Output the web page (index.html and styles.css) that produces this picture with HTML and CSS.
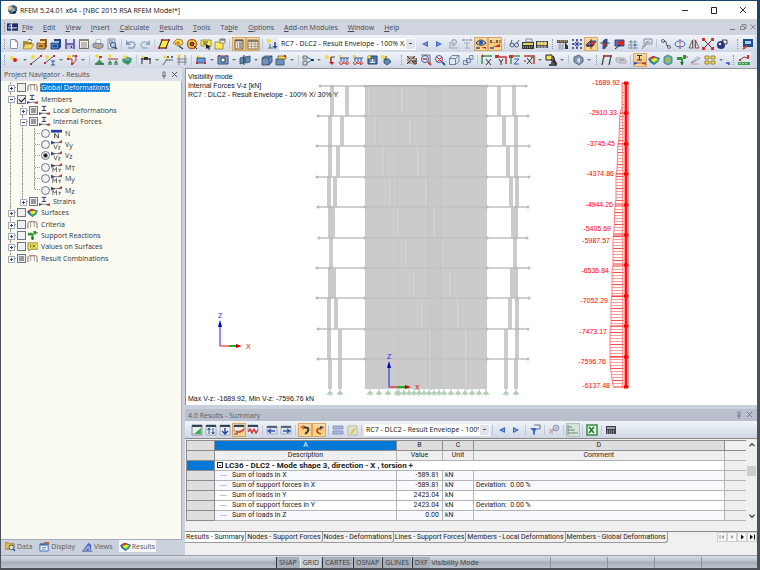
FILE: index.html
```html
<!DOCTYPE html>
<html lang="en">
  <head>
    <meta charset="UTF-8" />
    <meta name="viewport" content="width=device-width, initial-scale=1.0" />
    <title>RFEM 5.24.01 x64 - [NBC 2015 RSA RFEM Model*]</title>
    <link rel="stylesheet" href="styles.css">
  </head>
  <body>
    <!-- Icon set, 12 x 12 -->
    <svg class="sprite" aria-hidden="true">
      <symbol id="app" viewBox="0 0 12 12"><path d="M3 2l5-1 3 2v4l-3 3H4L2 7z" fill="#3d5c8c"/><path d="M1 4l4-2 2 2-3 3z" fill="#d9c37a"/><path d="M5 5l4-1v3l-3 1z" fill="#93a9c8"/><path d="M7 9l3-1" stroke="#222" stroke-width="2"/></symbol>
      <symbol id="doc" viewBox="0 0 12 12"><path d="M0 2h12v8H0z" fill="#1c2c6e"/><path d="M1 7h10M5 2v8M2 5l3-2" stroke="#fff"/></symbol>
      <symbol id="new" viewBox="0 0 12 12"><path d="M2.500 1.500h5l2 2v7h-7z" fill="#fff" stroke="#8a93a5"/><path d="M7.500 1.500v2h2" fill="none" stroke="#8a93a5"/></symbol>
      <symbol id="open" viewBox="0 0 12 12"><path d="M1 3h4l1 1h4v6H1z" fill="#a8892d"/><path d="M3 6h9l-3 5H1z" fill="#f2d768" stroke="#8a6f1d" stroke-width=".6"/><path d="M6 2c2-1 3-1 4 1" fill="none" stroke="#456"/></symbol>
      <symbol id="cab" viewBox="0 0 12 12"><path d="M4 1h7v8l-2 2V5H4z" fill="#8d5f1d"/><path d="M1 5h8v6H1z" fill="#dd9d3c" stroke="#4f3510" stroke-width=".7"/><path d="M4 3h5v2H4z" fill="#f5cf8a"/><path d="M3 8h4" stroke="#222"/></symbol>
      <symbol id="cabb" viewBox="0 0 12 12"><path d="M4 1h7v8l-2 2V5H4z" fill="#27477f"/><path d="M1 5h8v6H1z" fill="#4c7cc8" stroke="#15294f" stroke-width=".7"/><path d="M4 3h5v2H4z" fill="#9cbbe8"/><path d="M3 8h4" stroke="#112"/></symbol>
      <symbol id="save" viewBox="0 0 12 12"><path d="M1 1h10v10H1z" fill="#7168ad"/><path d="M3 1h6v4H3z" fill="#dfe2f2"/><path d="M3 7h6v4H3z" fill="#b9b6da"/><path d="M7 8h1v2H7z" fill="#333"/></symbol>
      <symbol id="list" viewBox="0 0 12 12"><rect x="1.500" y="1.500" width="9" height="9" fill="#f4f1e6" stroke="#77705f"/><path d="M1 2h10" stroke="#8f8673" stroke-width="2"/><path d="M3 5h6M3 7h6M3 9h6" stroke="#888"/></symbol>
      <symbol id="print" viewBox="0 0 12 12"><path d="M3 5l2-4 4 1-1 4z" fill="#fff" stroke="#889" stroke-width=".6"/><path d="M1 6l3-1 7 1v3l-4 2-6-2z" fill="#a8adb9" stroke="#555d70" stroke-width=".7"/><path d="M3 8l4 1" stroke="#e0a030"/></symbol>
      <symbol id="preview" viewBox="0 0 12 12"><path d="M2 1h7v10H2z" fill="#dfe6f2" stroke="#6a7890" stroke-width=".8"/><path d="M3 3h4M3 5h2" stroke="#5574a5"/><circle cx="7" cy="7" r="2.500" fill="#bcd8f0" stroke="#344a6c"/><path d="M9 9l2 2" stroke="#344a6c" stroke-width="1.500"/></symbol>
      <symbol id="undo" viewBox="0 0 12 12"><path d="M3 5c3-2 7-1 7 2 0 1-1 2-2 3H3" fill="none" stroke="#8fa3bd" stroke-width="1.500"/><path d="M1 2v5h5z" fill="#8199b8"/></symbol>
      <symbol id="redo" viewBox="0 0 12 12"><path d="M9 5C6 3 2 4 2 7c0 1 1 2 2 3h5" fill="none" stroke="#a0b4cb" stroke-width="1.500"/><path d="M11 2v5H6z" fill="#8fa6c2"/></symbol>
      <symbol id="poly" viewBox="0 0 12 12"><path d="M4 2h7L8 10H1z" fill="#ffe94a" stroke="#111"/><path d="M3 1h2v2H3zM10 1h2v2h-2zM0 9h2v2H0zM7 9h2v2H7z" fill="#c22"/></symbol>
      <symbol id="lens" viewBox="0 0 12 12"><path d="M1 5l4-4 5 1 1 4-5 2z" fill="#ffe44a" stroke="#8a6a1d" stroke-width=".8"/><path d="M3 5h5M6 3v4" stroke="#c33" stroke-width=".8"/><path d="M7 8l4 3" stroke="#444" stroke-width="1.500"/></symbol>
      <symbol id="target" viewBox="0 0 12 12"><circle cx="6" cy="6" r="4.500" fill="#ffe44a" stroke="#c1561a" stroke-width="1.500"/><circle cx="6" cy="6" r="2" fill="#e33" stroke="#222"/><path d="M8 8l3 3" stroke="#222"/></symbol>
      <symbol id="note" viewBox="0 0 12 12"><path d="M1 2h10v6H1z" fill="#fbec52" stroke="#8b8434" stroke-width=".8"/><path d="M3 4h5M3 6h4" stroke="#444"/><path d="M6 6l5 3-2 .5 1 2-1 .5-1-2-2 1z" fill="#222"/></symbol>
      <symbol id="sheet" viewBox="0 0 12 12"><path d="M1 4h8v7H1z" fill="#fbec52" stroke="#8b8434" stroke-width=".8"/><path d="M6 1h5v4H6z" fill="#f8f8ef" stroke="#6c6c5a" stroke-width=".8"/><path d="M6 2h5" stroke="#444"/></symbol>
      <symbol id="nav" viewBox="0 0 12 12"><rect x="2" y="2" width="8" height="9" fill="#efe8da" stroke="#5f5646"/><path d="M2 2.500h8" stroke="#555" stroke-width="1.500"/><path d="M4 5h1M6 5h3M4 7h1M6 7h3M4 9h1M6 9h3" stroke="#555"/></symbol>
      <symbol id="grid" viewBox="0 0 12 12"><rect x="1" y="2" width="10" height="9" fill="#f1e8d6" stroke="#6b604b" stroke-width=".8"/><path d="M1 3h10" stroke="#8a7a5c" stroke-width="2"/><path d="M1 6h10M1 8.500h10M4.500 4v7M8 4v7" stroke="#9a8c70" stroke-width=".7"/></symbol>
      <symbol id="load" viewBox="0 0 12 12"><circle cx="3" cy="3" r="2" fill="#f3da3a"/><path d="M2 10h5M4 6v4" stroke="#666"/><path d="M9 4v5" stroke="#2746a6" stroke-width="1.500"/><path d="M6.500 8h5L9 11z" fill="#2746a6"/></symbol>
      <symbol id="prev" viewBox="0 0 12 12"><path d="M9 3v6L3 6z" fill="#3a67c4"/><path d="M8 5v2L6 6z" fill="#b5ccf3"/></symbol>
      <symbol id="next" viewBox="0 0 12 12"><path d="M3 3v6l6-3z" fill="#3a67c4"/><path d="M4 5v2l2-1z" fill="#b5ccf3"/></symbol>
      <symbol id="ghost" viewBox="0 0 12 12"><circle cx="7" cy="4" r="2.500" fill="#cfd4dc" stroke="#9aa2af"/><path d="M2 10h9M3 4v6M5 8l3-1" stroke="#a2a9b5" stroke-width="1.200" fill="none"/></symbol>
      <symbol id="ghostx" viewBox="0 0 12 12"><path d="M1 2h3M5 2h2M8 2h3" stroke="#8f97a5" stroke-width="1.500"/><path d="M3 5h6M6 5v5M4 10h5" stroke="#a8aebb"/></symbol>
      <symbol id="eye" viewBox="0 0 12 12"><path d="M1 5c3-4 7-4 10 0-3 3-7 3-10 0z" fill="#a9bcd8" stroke="#253a68"/><circle cx="6" cy="4.500" r="2" fill="#2b4f9c"/><path d="M1 10h4" stroke="#2b4f9c" stroke-width="1.500"/><path d="M6 9h5v2z" fill="#d52b1e"/></symbol>
      <symbol id="xxx" viewBox="0 0 12 12"><path d="M1 2l2 3M3 2L1 5M5 4v1M7 2l2 3M9 2L7 5M11 2v3" stroke="#5a3d12" stroke-width=".9"/><path d="M1 10h4" stroke="#2b4f9c" stroke-width="1.500"/><path d="M4 9l7-3v3z" fill="#d52b1e"/></symbol>
      <symbol id="glass" viewBox="0 0 12 12"><circle cx="4" cy="7" r="2" fill="none" stroke="#4a5c7c"/><circle cx="8.500" cy="7" r="2" fill="none" stroke="#4a5c7c"/><path d="M2 7l2-5M9 5l2-3" stroke="#4a5c7c" fill="none"/></symbol>
      <symbol id="film" viewBox="0 0 12 12"><path d="M0 4h12v7H0z" fill="#3a3a36"/><path d="M1 5h10v2H1z" fill="#e5d45e"/><path d="M1 9h10" stroke="#ccd" stroke-dasharray="1 1"/><path d="M4 1h6v3H4z" fill="#e9edf4" stroke="#567" stroke-width=".7"/></symbol>
      <symbol id="film2" viewBox="0 0 12 12"><path d="M0 3h12v7H0z" fill="#3a3a36"/><path d="M1 4h10v3H1z" fill="#d9c84f"/><path d="M3 3v7M6 3v7M9 3v7M1 9h10" stroke="#dde" stroke-width=".7"/></symbol>
      <symbol id="shade" viewBox="0 0 12 12"><path d="M0 2h11v3H0z" fill="#5f574a"/><path d="M1 3h9" stroke="#d7c9a4" stroke-dasharray="1 1"/><path d="M1 7h6M1 9h6M1 11h6M3 5v6M6 5v6" stroke="#8d97a6" stroke-width=".7"/><path d="M8 4l3 4v3H8z" fill="#333"/></symbol>
      <symbol id="dots" viewBox="0 0 12 12"><path d="M1 1h2v2H1zM9 1h2v2H9zM1 9h2v2H1zM9 9h2v2H9zM5 1h2v2H5zM5 9h2v2H5zM1 5h2v2H1zM9 5h2v2H9z" fill="#5968a8"/><path d="M6 2v8M2 6h8M4 4l4 4M8 4L4 8" stroke="#26358c" stroke-width=".8"/></symbol>
      <symbol id="planeb" viewBox="0 0 12 12"><path d="M1 7l4-4h6L8 8H2z" fill="#3d76d0" stroke="#16325f" stroke-width=".8"/><path d="M6 1v10M1 8h7" stroke="#222" stroke-width=".8"/><path d="M5 4h3v3H5z" fill="#d22"/></symbol>
      <symbol id="planer" viewBox="0 0 12 12"><path d="M4 3l4-2v7l-4 3z" fill="#3d62c0" stroke="#16325f" stroke-width=".8"/><path d="M1 5h10M6 1v10" stroke="#333" stroke-width=".8"/><path d="M4 5h3v3H4z" fill="#d22"/></symbol>
      <symbol id="planex" viewBox="0 0 12 12"><path d="M2 2h9v6H2z" fill="#4674ca" stroke="#16325f" stroke-width=".8"/><path d="M5 3h5v4H5z" fill="#d22"/><path d="M2 11l5-4" stroke="#222"/></symbol>
      <symbol id="wire" viewBox="0 0 12 12"><path d="M2 4h8M1 7h10M1 10h10M4 2v9M8 2v9" stroke="#7e93aa" fill="none"/><path d="M3 3h1v1H3zM7 6h2v2H7z" fill="#58768f"/></symbol>
      <symbol id="wire2" viewBox="0 0 12 12"><path d="M3 1h8v5H3z" fill="#dfe5ee" stroke="#8391a6"/><path d="M1 11l6-8M1 8h4M5 4h4" stroke="#8391a6"/></symbol>
      <symbol id="copy" viewBox="0 0 12 12"><circle cx="3" cy="3" r="1.500" fill="none" stroke="#667"/><circle cx="9" cy="9" r="1.500" fill="none" stroke="#667"/><path d="M4 3c4 0 1 5 4 5" stroke="#333" fill="none"/></symbol>
      <symbol id="rot" viewBox="0 0 12 12"><ellipse cx="6" cy="6" rx="5" ry="3" fill="none" stroke="#4565b5"/><path d="M6 1v10" stroke="#c33" stroke-dasharray="2 1"/></symbol>
      <symbol id="mirror" viewBox="0 0 12 12"><path d="M4.500 2v8H1zM7.500 2v8H11z" fill="#e3e6ec" stroke="#555" stroke-width=".9"/><path d="M6 1v10" stroke="#b55" stroke-width=".7"/></symbol>
      <symbol id="cross" viewBox="0 0 12 12"><path d="M1 1l10 10M11 1L1 11" stroke="#333"/><path d="M0 0h3v3H0zM9 0h3v3H9zM0 9h3v3H0zM9 9h3v3H9zM5 5h2v2H5z" fill="#d3322a"/></symbol>
      <symbol id="ball" viewBox="0 0 12 12"><circle cx="5" cy="7" r="4" fill="#26357d"/><path d="M6 2h5v4H8z" fill="#dfe3ee" stroke="#222" stroke-width=".8"/><circle cx="4" cy="6" r="1.300" fill="#dfe3ee"/></symbol>
      <symbol id="screen" viewBox="0 0 12 12"><path d="M1 1h10v8H1z" fill="#214a8b"/><path d="M3 3h6v3H3z" fill="#a9cdf0"/><path d="M1 11l4-3" stroke="#d43" stroke-width="2"/></symbol>
      <symbol id="node" viewBox="0 0 12 12"><circle cx="4" cy="4" r="2" fill="#f3da3a"/><circle cx="7" cy="6" r="2" fill="#d22"/></symbol>
      <symbol id="line" viewBox="0 0 12 12"><circle cx="3" cy="3" r="2" fill="#f3da3a"/><path d="M1 10L11 2" stroke="#555"/><path d="M0 9h2v2H0zM10 1h2v2h-2z" fill="#d22"/></symbol>
      <symbol id="member" viewBox="0 0 12 12"><circle cx="3" cy="3" r="2" fill="#f3da3a"/><path d="M1 9L10 2" stroke="#555"/><path d="M0 8h2v2H0zM9 1h2v2H9z" fill="#d22"/><path d="M7 7h4M9 7v4M7 11h4" stroke="#3452a4"/></symbol>
      <symbol id="arc" viewBox="0 0 12 12"><circle cx="3" cy="3" r="2" fill="#f3da3a"/><path d="M2 5h4v5M6 2h4v4L7 10" stroke="#a33" fill="none"/><path d="M1 4h2v2H1zM9 1h2v2H9zM5 9h2v2H5z" fill="#d22"/></symbol>
      <symbol id="sup" viewBox="0 0 12 12"><circle cx="4" cy="2" r="1.700" fill="#f3da3a"/><path d="M6 2v4l-3 3h7L7 6" fill="#3a9a4c"/><path d="M2 10h9" stroke="#225c2d" stroke-width="1.500"/><path d="M6 2h3v2H6z" fill="#c33"/></symbol>
      <symbol id="sup2" viewBox="0 0 12 12"><circle cx="3" cy="2" r="1.700" fill="#f3da3a"/><path d="M1 5h10" stroke="#a33"/><path d="M3 6l2 3H1zM9 6l2 3H7z" fill="#3a9a4c"/><path d="M1 10h4M7 10h4" stroke="#225c2d"/></symbol>
      <symbol id="surf" viewBox="0 0 12 12"><path d="M1 8l5-3 5 2-4 4z" fill="#3aa055"/><path d="M1 6l5-3 5 2-4 3z" fill="#55b0b4" stroke="#225c2d" stroke-width=".6"/><circle cx="4" cy="3" r="1.700" fill="#f3da3a"/></symbol>
      <symbol id="dim" viewBox="0 0 12 12"><circle cx="3" cy="3" r="1.500" fill="#f3da3a"/><path d="M1 5h10M2 4v6M10 4v6" stroke="#222" fill="none"/><path d="M4 3h4v3H4z" fill="#333"/></symbol>
      <symbol id="xx" viewBox="0 0 12 12"><circle cx="3" cy="3" r="1.700" fill="#f3da3a"/><path d="M4 6h7M1 11l4-6" stroke="#466"/><path d="M5 2l2 2M7 2L5 4M9 2l2 2M11 2L9 4" stroke="#333" stroke-width=".7"/></symbol>
      <symbol id="axes" viewBox="0 0 12 12"><circle cx="3" cy="2" r="1.700" fill="#f3da3a"/><path d="M1 8h10M3 3v8M9 1v10M1 5h10" stroke="#777" stroke-width=".9"/></symbol>
      <symbol id="rect" viewBox="0 0 12 12"><circle cx="3" cy="3" r="1.700" fill="#f3da3a"/><path d="M2 4h8v5H2z" fill="#6a9bd5" stroke="#34507e"/><path d="M9 8h2v2H9zM1 8h2v2H1z" fill="#d22"/></symbol>
      <symbol id="opening" viewBox="0 0 12 12"><path d="M1 2h10v8H1z" fill="#7aa3d4" stroke="#34507e"/><path d="M4 4h4v4H4z" fill="#fff" stroke="#333"/><path d="M1 1h2v2H1zM9 1h2v2H9z" fill="#a44"/></symbol>
      <symbol id="inter" viewBox="0 0 12 12"><path d="M1 4l4-1v6L1 10zM6 3l5-1v6l-5 1z" fill="#5b8fb4" stroke="#2d4d6c" stroke-width=".8"/><path d="M5 1v10" stroke="#333"/></symbol>
      <symbol id="solid" viewBox="0 0 12 12"><path d="M1 4l3-2h7v6l-3 3H1z" fill="#6d93bd" stroke="#2d4462" stroke-width=".8"/><path d="M1 4h7v7M8 4l3-2" stroke="#2d4462" fill="none" stroke-width=".8"/></symbol>
      <symbol id="solidn" viewBox="0 0 12 12"><path d="M1 5h8v6H1z" fill="#6d93bd" stroke="#2d4462" stroke-width=".8"/><path d="M3 2h8v3H3z" fill="#eecf62" stroke="#7d6820" stroke-width=".8"/><path d="M9 1h2v2H9z" fill="#d22"/></symbol>
      <symbol id="conn" viewBox="0 0 12 12"><path d="M1 2h4v3H1zM1 7h4v4H1z" fill="#cfd8e4" stroke="#555" stroke-width=".8"/><path d="M5 3l5 3-5 3" fill="none" stroke="#2c8a92"/><path d="M9 5h3v2H9z" fill="#235"/></symbol>
      <symbol id="loadn" viewBox="0 0 12 12"><circle cx="3" cy="3" r="1.900" fill="#f3da3a"/><path d="M7 3v6" stroke="#b22" stroke-width="1.500"/><path d="M5 8h5l-2 3z" fill="#b22"/><path d="M7 3h4" stroke="#445"/></symbol>
      <symbol id="loadm" viewBox="0 0 12 12"><circle cx="2.500" cy="2.500" r="1.800" fill="#f3da3a"/><path d="M2 4h9M3 4v4M6 4v4M9 4v4" stroke="#3452a4" fill="none"/><path d="M1 8l2 3 2-3M5 8l1 2 2-2M8 8l1 3 2-3" stroke="#c33" fill="none"/></symbol>
      <symbol id="loads" viewBox="0 0 12 12"><path d="M2 2h9v8H2z" fill="#4f78b8" stroke="#223e6c"/><path d="M4 5h5v4H4z" fill="#e8eef8"/><circle cx="3" cy="3" r="1.700" fill="#f3da3a"/><path d="M5 4v4M8 4v4" stroke="#235"/></symbol>
      <symbol id="loadf" viewBox="0 0 12 12"><circle cx="3" cy="3" r="1.900" fill="#f3da3a"/><path d="M4 5h5l2 3-4 3-3-2z" fill="#5d87ad" stroke="#26405c" stroke-width=".7"/><path d="M6 2v4" stroke="#333"/></symbol>
      <symbol id="sel" viewBox="0 0 12 12"><path d="M1 2h8v8H1z" fill="#b0a698"/><path d="M1 2l8 8M9 2L1 10" stroke="#433"/><path d="M5 4h6v6l-3 1z" fill="#6b6156"/><path d="M4 6l6-1" stroke="#ddc"/></symbol>
      <symbol id="zoomw" viewBox="0 0 12 12"><path d="M1 1h9v8" stroke="#445" fill="none" stroke-width=".7"/><circle cx="5" cy="5" r="3.500" fill="#dbe9f8" stroke="#3c5ea0"/><path d="M3 5h4" stroke="#c33" stroke-width="1.500"/><path d="M8 8l3 3" stroke="#c33" stroke-width="1.800"/></symbol>
      <symbol id="zoomr" viewBox="0 0 12 12"><circle cx="5" cy="5" r="3.500" fill="#f4e5e5" stroke="#3c5ea0"/><path d="M3 3l5 5M8 3L3 8" stroke="#d22"/><path d="M8 8l3 3" stroke="#334f8c" stroke-width="1.800"/></symbol>
      <symbol id="cube" viewBox="0 0 12 12"><path d="M1.500 4.500h6v6h-6zM4 1.500h7v6M1.500 4.500L4 1.500M7.500 4.500l3.500-3M7.500 10.500l3.500-3" fill="#dfe7f1" stroke="#5f7899" stroke-width=".9"/></symbol>
      <symbol id="cubes" viewBox="0 0 12 12"><path d="M1.500 6.500h4v4h-4zM4.500 4.500h4v4h-4zM7.500 1.500h3.500v4H7.500z" fill="#d9e3f0" stroke="#6680a4" stroke-width=".9"/></symbol>
      <symbol id="vx" viewBox="0 0 12 12"><path d="M1 10V2h10" stroke="#3a9a4c" stroke-width="1.500" fill="none"/><path d="M0 3h3L1.500 0z" fill="#c33"/><path d="M5 5l5 6M10 5l-5 6" stroke="#333"/></symbol>
      <symbol id="vy" viewBox="0 0 12 12"><path d="M1 3h10v7" stroke="#c33" stroke-width="1.500" fill="none"/><path d="M0 1h4v3H0z" fill="#b33"/><path d="M4 5l2 3 2-3M6 8v3" stroke="#333" fill="none"/></symbol>
      <symbol id="vz" viewBox="0 0 12 12"><path d="M2 10V2h9" stroke="#3a9a4c" stroke-width="1.500" fill="none"/><path d="M0 1h4v3H0z" fill="#b33"/><path d="M5 5h5l-5 5h5" stroke="#345ab0" fill="none"/></symbol>
      <symbol id="vmx" viewBox="0 0 12 12"><path d="M1 2h10v8" stroke="#c33" stroke-width="1.500" fill="none"/><path d="M1 7h2M4 4l5 6M9 4l-5 6" stroke="#333"/><path d="M7 3l4-2v4z" fill="#3a9a4c"/></symbol>
      <symbol id="pick" viewBox="0 0 12 12"><path d="M1 1h6v5H1z" fill="#f7e84a" stroke="#222"/><path d="M4 11h7V9H6M8 2l2 6-4-2" stroke="#222" stroke-width="1.500" fill="none"/></symbol>
      <symbol id="render" viewBox="0 0 12 12"><path d="M2 3l5-2 4 3v4l-4 3-5-3z" fill="#8298b0" stroke="#475a70" stroke-width=".8"/><path d="M5 5l3-1v4l-2 1z" fill="#dbe3ec"/></symbol>
      <symbol id="frame" viewBox="0 0 12 12"><path d="M1 11L3 2h7L8 11" stroke="#444" fill="none" stroke-width="1.300"/><path d="M2 1h2v2H2zM9 1h2v2H9z" fill="#c33"/><path d="M2 6h1M9 6h1" stroke="#3a9a4c" stroke-width="2"/></symbol>
      <symbol id="plate" viewBox="0 0 12 12"><path d="M1 4h8l2 2v3H4L1 7z" fill="#c9cdd4" stroke="#9aa0ab" stroke-width=".8"/><path d="M4 6h5" stroke="#888"/></symbol>
      <symbol id="beam" viewBox="0 0 12 12"><path d="M3 1.500h5M5.500 1v5M3 6h5" stroke="#26386e"/><path d="M0 11V8l4 1z" fill="#2b3fd0"/><path d="M12 11V8L8 9v1z" fill="#e33"/><path d="M1 9h10" stroke="#555" stroke-width=".7"/></symbol>
      <symbol id="iso" viewBox="0 0 12 12"><path d="M0 5l5-3 7 2-2 4-4 3-4-3z" fill="#2a55c8"/><path d="M2 5l4-2 5 2-2 3-3 2-3-3z" fill="#35c04a"/><path d="M3 5l3-1 4 1-2 2-3 1z" fill="#f4e62f"/><path d="M1 4l4-2 3 1-4 2z" fill="#e02e1e"/></symbol>
      <symbol id="isoc" viewBox="0 0 12 12"><path d="M2 3l4-2 4 2v6l-4 2-4-2z" fill="#58b7a5" stroke="#478" stroke-width=".8"/><circle cx="6" cy="6" r="2" fill="#e4c744"/><path d="M6 5v2" stroke="#c53"/></symbol>
      <symbol id="plant" viewBox="0 0 12 12"><path d="M5 4h2v7H5zM1 3h5v3H1zM7 1h3v4H7z" fill="#2b9a3a"/><path d="M4 8l2 3 2-3z" fill="#1b6d28"/><path d="M9 3h3" stroke="#c33"/></symbol>
      <symbol id="section" viewBox="0 0 12 12"><path d="M1 9l9-5" stroke="#8894a5" stroke-width="1.500"/><path d="M4 6l3-4 4 2-4 3z" fill="#bac5d8"/><path d="M1 10h8" stroke="#b99"/></symbol>
      <symbol id="tiles" viewBox="0 0 12 12"><path d="M1 2h4v3H1zM7 2h4v3H7zM1 7h4v3H1zM7 7h4v3H7z" fill="#f6df4a" stroke="#8c7c34" stroke-width=".9"/></symbol>
      <symbol id="cut" viewBox="0 0 12 12"><path d="M1 9h3v2" fill="none" stroke="#2b4fd0" stroke-width="1.500"/></symbol>
      <symbol id="scale" viewBox="0 0 12 12"><path d="M0 8h12v3H0z" fill="#43a052"/><path d="M2 6l4-3 4 1" stroke="#933" fill="none"/><path d="M1 5h2v2H1zM9 1h2v4H9z" fill="#c33"/><path d="M2 9v1M5 9v1M8 9v1" stroke="#fff"/></symbol>
      <!-- results table toolbar -->
      <symbol id="t1" viewBox="0 0 12 12"><path d="M1 1h10v10H1z" fill="#e8eef2" stroke="#678" stroke-width=".8"/><path d="M1 2h10" stroke="#345" stroke-width="2"/><path d="M10 4v6H3z" fill="#3cae4b"/></symbol>
      <symbol id="t2" viewBox="0 0 12 12"><path d="M1 1h10v10H1z" fill="#e8eef2" stroke="#89a" stroke-width=".8"/><path d="M1 2h10" stroke="#345" stroke-width="2"/><path d="M4 10V4M2.500 6L4 4l1.500 2M8 4v6M6.500 8L8 10l1.500-2" stroke="#2646a6" fill="none"/></symbol>
      <symbol id="t3" viewBox="0 0 12 12"><path d="M1 1h10v10H1z" fill="#e8eef2" stroke="#89a" stroke-width=".8"/><path d="M1 2h10" stroke="#345" stroke-width="2"/><path d="M6 4v6M3 7l3 3 3-3" stroke="#2646a6" stroke-width="1.500" fill="none"/></symbol>
      <symbol id="t4" viewBox="0 0 12 12"><path d="M1 1h10v6H1z" fill="#f8ecd8" stroke="#89a" stroke-width=".8"/><path d="M1 2h10" stroke="#345" stroke-width="2"/><path d="M3 8h4l4-3" stroke="#c33" stroke-width="1.500" fill="none"/><path d="M1 10h4" stroke="#2646a6"/></symbol>
      <symbol id="t5" viewBox="0 0 12 12"><path d="M1 1h10v6H1z" fill="#e8eef2" stroke="#89a" stroke-width=".8"/><path d="M1 2h10" stroke="#345" stroke-width="2"/><path d="M1 8l2-3 2 4 2-4 2 4 2-3" stroke="#d22" stroke-width="1.200" fill="none"/></symbol>
      <symbol id="tl" viewBox="0 0 12 12"><path d="M1 2h10v8H1z" fill="#dfe4ec" stroke="#9aa5b5" stroke-width=".8"/><path d="M1 3h10" stroke="#56637a" stroke-width="2"/><path d="M2 7h7M5 5L2 7l3 2" stroke="#2f55b5" stroke-width="1.300" fill="none"/></symbol>
      <symbol id="tr" viewBox="0 0 12 12"><path d="M1 2h10v8H1z" fill="#dfe4ec" stroke="#9aa5b5" stroke-width=".8"/><path d="M1 3h10" stroke="#56637a" stroke-width="2"/><path d="M3 7h7M7 5l3 2-3 2" stroke="#2f55b5" stroke-width="1.300" fill="none"/></symbol>
      <symbol id="hook" viewBox="0 0 12 12"><path d="M4 3l5 1c1 2 0 4-3 6" stroke="#333" stroke-width="1.800" fill="none"/><path d="M1 3l4-2v5z" fill="#d86a1c"/></symbol>
      <symbol id="hook2" viewBox="0 0 12 12"><path d="M8 4L5 5c-2 2-1 4 3 5" stroke="#a8501a" stroke-width="1.800" fill="none"/><path d="M7 2l4 1-4 3z" fill="#444"/></symbol>
      <symbol id="rows" viewBox="0 0 12 12"><path d="M1 2h10v3H1zM1 7h10v3H1z" fill="#aeb6dc" stroke="#7f89b8" stroke-width=".8"/></symbol>
      <symbol id="edit" viewBox="0 0 12 12"><path d="M2 2h9v9H2z" fill="#e3e3d0" stroke="#b0ae93" stroke-width=".8"/><path d="M4 9l4-5 2 1-4 5z" fill="#d5c76a"/></symbol>
      <symbol id="filter" viewBox="0 0 12 12"><path d="M1 4h8L6 7v4L4 10V7z" fill="#3d6cb9"/><path d="M5 1h6v4H8" fill="#e7edf5" stroke="#456" stroke-width=".8"/></symbol>
      <symbol id="find" viewBox="0 0 12 12"><circle cx="8" cy="4" r="3" fill="#bcc6dc" stroke="#8f9cb8"/><path d="M1 6h6M1 9l5-4M4 7v4" stroke="#c0909a"/></symbol>
      <symbol id="bars" viewBox="0 0 12 12"><path d="M1 1v10M1 3h4M1 6h7M1 9h10" stroke="#8da69a" stroke-width="1.500"/></symbol>
      <symbol id="excel" viewBox="0 0 12 12"><path d="M1 1h10v10H1z" fill="#e9f6ea" stroke="#2f8d3c" stroke-width="1.500"/><path d="M3 3l5 6M8 3L3 9" stroke="#1e7a2c" stroke-width="1.600"/></symbol>
      <symbol id="calc" viewBox="0 0 12 12"><path d="M1 2h10v8H1z" fill="#3d4046"/><path d="M2 3h8v2H2z" fill="#9aa3ae"/><path d="M2 7h8M2 9h8" stroke="#c5c9d0" stroke-dasharray="1 1"/></symbol>
      <!-- navigator -->
      <symbol id="bridge" viewBox="0 0 12 12"><path d="M1 10c0-6 0-7 2-7h6c2 0 2 1 2 7" stroke="#8a5050" fill="none"/><path d="M4 9V3M8 9V3" stroke="#999"/></symbol>
      <symbol id="forcen" viewBox="0 0 12 12"><path d="M0 2h12v3H0z" fill="#2b3fb0"/><path d="M4 11V6l4 5V6" stroke="#333" fill="none"/></symbol>
      <symbol id="force" viewBox="0 0 12 12"><path d="M0 2v4l5-2z" fill="#2b3fb0"/><path d="M12 1v3H7z" fill="#d33"/><path d="M0 4h12" stroke="#555" stroke-width=".8"/><path d="M3 6l2 5 2-5M8 8h2l-2 3h2" stroke="#444" fill="none" stroke-width=".8"/></symbol>
      <symbol id="forcem" viewBox="0 0 12 12"><path d="M0 2v4l5-2z" fill="#2b3fb0"/><path d="M12 1v3H7z" fill="#d33"/><path d="M0 4h12" stroke="#555" stroke-width=".8"/><path d="M2 11V6l2 3 2-3v5M8 8h3M9.500 8v3" stroke="#444" fill="none" stroke-width=".8"/></symbol>
      <symbol id="values" viewBox="0 0 12 12"><path d="M1 2h11v7H4l-2 2V9H1z" fill="#f2e64c" stroke="#77702a" stroke-width=".8"/><path d="M4 4v3M6 4l3 3M9 4L6 7" stroke="#333" stroke-width=".8"/></symbol>
      <symbol id="data" viewBox="0 0 12 12"><path d="M0 2h4l1 1h5v6H0z" fill="#e8b83e" stroke="#8a6a1d" stroke-width=".7"/><circle cx="7" cy="7" r="2.500" fill="#d5e6f5" stroke="#345a94"/><path d="M9 9l2 2" stroke="#345a94" stroke-width="1.500"/></symbol>
      <symbol id="display" viewBox="0 0 12 12"><path d="M1 3h9v8H1z" fill="#f0f4fa" stroke="#3e6cb5"/><path d="M1 4h9" stroke="#3e6cb5" stroke-width="2"/><path d="M5 1h6v3H7z" fill="#a3684a"/><path d="M3 7h5M3 9h4" stroke="#68a"/></symbol>
      <symbol id="views" viewBox="0 0 12 12"><path d="M1 10l6-8 3 2v6z" fill="#4f73c4"/><path d="M3 10l4-4 2 5" stroke="#dde7f8" fill="none"/><path d="M0 11h11" stroke="#2b4588"/></symbol>
    </svg>

    <!-- Title bar -->
    <header class="titlebar">
      <svg class="icon"><use href="#app"/></svg>
      <h1>RFEM 5.24.01 x64 - [NBC 2015 RSA RFEM Model*]</h1>
      <div class="window-buttons">
        <button aria-label="Minimize"><svg class="icon" viewBox="0 0 12 12"><path d="M3 6.500h6" stroke="#333"/></svg></button>
        <button aria-label="Maximize"><svg class="icon" viewBox="0 0 12 12"><path d="M3.500 3.500h5v6h-5z" fill="none" stroke="#222"/></svg></button>
        <button aria-label="Close"><svg class="icon" viewBox="0 0 12 12"><path d="M3 3l6 6M9 3l-6 6" stroke="#333"/></svg></button>
      </div>
    </header>

    <!-- Menu -->
    <nav class="menubar">
      <span class="grip"></span>
      <svg class="icon"><use href="#doc"/></svg>
      <a href="#"><u>F</u>ile</a>
      <a href="#"><u>E</u>dit</a>
      <a href="#"><u>V</u>iew</a>
      <a href="#"><u>I</u>nsert</a>
      <a href="#"><u>C</u>alculate</a>
      <a href="#"><u>R</u>esults</a>
      <a href="#"><u>T</u>ools</a>
      <a href="#">Ta<u>b</u>le</a>
      <a href="#"><u>O</u>ptions</a>
      <a href="#"><u>A</u>dd-on Modules</a>
      <a href="#"><u>W</u>indow</a>
      <a href="#"><u>H</u>elp</a>
      <div class="mdi-buttons">
        <button aria-label="Minimize model"><svg viewBox="0 0 8 8"><path d="M1 6.500h5" stroke="#777" stroke-width="1.200"/></svg></button>
        <button aria-label="Restore model"><svg viewBox="0 0 8 8"><path d="M1.500 3.500h4v3h-4zM3 3V1.500h4v4H6" fill="none" stroke="#888"/></svg></button>
        <button aria-label="Close model"><svg viewBox="0 0 8 8"><path d="M1.500 1.500l5 5M6.500 1.500l-5 5" stroke="#888"/></svg></button>
      </div>
    </nav>

    <!-- Toolbars -->
    <div class="toolbar-row">
      <div class="toolbar">
        <span class="grip"></span>
        <button class="tool" aria-label="New"><svg class="icon"><use href="#new"/></svg></button>
        <button class="tool" aria-label="Open"><svg class="icon"><use href="#open"/></svg></button>
        <button class="tool" aria-label="Block manager"><svg class="icon"><use href="#cab"/></svg></button>
        <button class="tool" aria-label="Project manager"><svg class="icon"><use href="#cabb"/></svg></button>
        <button class="tool" aria-label="Save"><svg class="icon"><use href="#save"/></svg></button>
        <button class="tool" aria-label="Report"><svg class="icon"><use href="#list"/></svg></button>
        <button class="tool" aria-label="Print"><svg class="icon"><use href="#print"/></svg></button>
        <button class="tool" aria-label="Preview"><svg class="icon"><use href="#preview"/></svg></button>
        <span class="sep"></span>
        <button class="tool" aria-label="Undo"><svg class="icon"><use href="#undo"/></svg></button>
        <button class="tool" aria-label="Redo"><svg class="icon"><use href="#redo"/></svg></button>
        <span class="sep"></span>
        <button class="tool" aria-label="Select polygon"><svg class="icon"><use href="#poly"/></svg></button>
        <button class="tool" aria-label="Select circle"><svg class="icon"><use href="#lens"/></svg></button>
        <button class="tool" aria-label="Select ring"><svg class="icon"><use href="#target"/></svg></button>
        <button class="tool" aria-label="Select note"><svg class="icon"><use href="#note"/></svg></button>
        <button class="tool" aria-label="New window"><svg class="icon"><use href="#sheet"/></svg></button>
        <span class="sep"></span>
        <button class="tool on" aria-label="Navigator"><svg class="icon"><use href="#nav"/></svg></button>
        <button class="tool on" aria-label="Tables"><svg class="icon"><use href="#grid"/></svg></button>
        <span class="sep"></span>
        <button class="tool" aria-label="Load cases"><svg class="icon"><use href="#load"/></svg></button>
        <span class="combo case">
          <select aria-label="Load case"><option>RC7 - DLC2 - Result Envelope - 100% X/ 30% Y</option></select>
        </span>
        <button class="tool" aria-label="Previous"><svg class="icon"><use href="#prev"/></svg></button>
        <button class="tool" aria-label="Next"><svg class="icon"><use href="#next"/></svg></button>
        <button class="tool" aria-label="Show loads"><svg class="icon"><use href="#ghost"/></svg></button>
        <button class="tool" aria-label="Load values"><svg class="icon"><use href="#ghostx"/></svg></button>
        <button class="tool on" aria-label="Show results"><svg class="icon"><use href="#eye"/></svg></button>
        <button class="tool on" aria-label="Result values"><svg class="icon"><use href="#xxx"/></svg></button>
        <span class="sep"></span>
        <button class="tool" aria-label="Glasses"><svg class="icon"><use href="#glass"/></svg></button>
        <button class="tool" aria-label="Record"><svg class="icon"><use href="#film"/></svg></button>
        <button class="tool" aria-label="Animate"><svg class="icon"><use href="#film2"/></svg></button>
      </div>
      <div class="toolbar">
        <span class="grip"></span>
        <button class="tool" aria-label="Work plane settings"><svg class="icon"><use href="#shade"/></svg></button>
        <button class="tool" aria-label="Snap grid"><svg class="icon"><use href="#dots"/></svg></button>
        <button class="tool on" aria-label="Plane XY"><svg class="icon"><use href="#planeb"/></svg></button>
        <button class="tool" aria-label="Plane YZ"><svg class="icon"><use href="#planer"/></svg></button>
        <button class="tool" aria-label="Plane XZ"><svg class="icon"><use href="#planex"/></svg></button>
        <button class="tool" aria-label="Background grid"><svg class="icon"><use href="#wire"/></svg></button>
        <button class="tool" aria-label="Guidelines"><svg class="icon"><use href="#wire2"/></svg></button>
        <span class="sep"></span>
        <button class="tool" aria-label="Move"><svg class="icon"><use href="#copy"/></svg></button>
        <button class="tool" aria-label="Rotate"><svg class="icon"><use href="#rot"/></svg></button>
        <button class="tool" aria-label="Mirror"><svg class="icon"><use href="#mirror"/></svg></button>
        <button class="tool" aria-label="Divide"><svg class="icon"><use href="#cross"/></svg></button>
        <button class="tool" aria-label="Extrude"><svg class="icon"><use href="#ball"/></svg></button>
        <span class="rest"></span>
      </div>
      <div class="toolbar">
        <span class="grip"></span>
        <button class="tool" aria-label="Screen"><svg class="icon"><use href="#screen"/></svg></button>
      </div>
    </div>

    <div class="toolbar-row">
      <div class="toolbar">
        <span class="grip"></span>
        <button class="tool" aria-label="Node"><svg class="icon"><use href="#node"/></svg></button>
        <button class="drop" aria-label="Node types"></button>
        <button class="tool" aria-label="Line"><svg class="icon"><use href="#line"/></svg></button>
        <button class="tool" aria-label="Member"><svg class="icon"><use href="#member"/></svg></button>
        <button class="drop" aria-label="Member types"></button>
        <button class="tool" aria-label="Polyline"><svg class="icon"><use href="#arc"/></svg></button>
        <button class="drop" aria-label="Polyline types"></button>
        <span class="sep"></span>
        <button class="tool" aria-label="Nodal support"><svg class="icon"><use href="#sup"/></svg></button>
        <button class="tool" aria-label="Line support"><svg class="icon"><use href="#sup2"/></svg></button>
        <button class="tool" aria-label="Surface support"><svg class="icon"><use href="#surf"/></svg></button>
        <span class="sep"></span>
        <button class="tool" aria-label="Dimension"><svg class="icon"><use href="#dim"/></svg></button>
        <button class="drop" aria-label="Dimension types"></button>
        <button class="tool" aria-label="Comment"><svg class="icon"><use href="#xx"/></svg></button>
        <button class="tool" aria-label="Guideline"><svg class="icon"><use href="#axes"/></svg></button>
        <span class="sep"></span>
        <button class="tool" aria-label="Surface"><svg class="icon"><use href="#rect"/></svg></button>
        <button class="drop" aria-label="Surface types"></button>
        <button class="tool" aria-label="Opening"><svg class="icon"><use href="#opening"/></svg></button>
        <button class="drop" aria-label="Opening types"></button>
        <button class="tool" aria-label="Intersection"><svg class="icon"><use href="#inter"/></svg></button>
        <button class="drop" aria-label="Intersection types"></button>
        <button class="tool" aria-label="Solid"><svg class="icon"><use href="#solid"/></svg></button>
        <button class="tool" aria-label="New solid"><svg class="icon"><use href="#solidn"/></svg></button>
        <button class="drop" aria-label="Solid types"></button>
        <span class="sep"></span>
        <button class="tool" aria-label="Connect"><svg class="icon"><use href="#conn"/></svg></button>
        <button class="drop" aria-label="Connect types"></button>
        <button class="tool" aria-label="Nodal load"><svg class="icon"><use href="#loadn"/></svg></button>
        <button class="tool" aria-label="Member load"><svg class="icon"><use href="#loadm"/></svg></button>
        <button class="tool" aria-label="Line load"><svg class="icon"><use href="#loadm"/></svg></button>
        <button class="tool" aria-label="Surface load"><svg class="icon"><use href="#loads"/></svg></button>
        <button class="tool" aria-label="Free load"><svg class="icon"><use href="#loadf"/></svg></button>
        <span class="rest"></span>
      </div>
      <div class="toolbar">
        <span class="grip"></span>
        <button class="tool" aria-label="Selection"><svg class="icon"><use href="#sel"/></svg></button>
        <button class="tool" aria-label="Zoom window"><svg class="icon"><use href="#zoomw"/></svg></button>
        <button class="tool" aria-label="Zoom all"><svg class="icon"><use href="#zoomr"/></svg></button>
        <button class="tool" aria-label="Isometric"><svg class="icon"><use href="#cube"/></svg></button>
        <button class="tool" aria-label="Perspective"><svg class="icon"><use href="#cubes"/></svg></button>
        <span class="sep"></span>
        <button class="tool" aria-label="View X"><svg class="icon"><use href="#vx"/></svg></button>
        <button class="tool" aria-label="View Y"><svg class="icon"><use href="#vy"/></svg></button>
        <button class="tool" aria-label="View Z"><svg class="icon"><use href="#vz"/></svg></button>
        <button class="tool" aria-label="View -X"><svg class="icon"><use href="#vmx"/></svg></button>
        <button class="drop" aria-label="More views"></button>
        <button class="tool" aria-label="Visibility"><svg class="icon"><use href="#pick"/></svg></button>
        <button class="drop" aria-label="Visibility options"></button>
        <span class="sep"></span>
        <button class="tool" aria-label="Render"><svg class="icon"><use href="#render"/></svg></button>
        <button class="drop" aria-label="Render options"></button>
      </div>
      <div class="toolbar">
        <span class="grip"></span>
        <button class="tool" aria-label="Deformations"><svg class="icon"><use href="#frame"/></svg></button>
        <button class="tool" aria-label="Plates"><svg class="icon"><use href="#plate"/></svg></button>
        <span class="sep"></span>
        <button class="tool on" aria-label="Member results"><svg class="icon"><use href="#beam"/></svg></button>
        <button class="tool" aria-label="Surface results"><svg class="icon"><use href="#iso"/></svg></button>
        <button class="tool" aria-label="Solid results"><svg class="icon"><use href="#isoc"/></svg></button>
        <button class="tool" aria-label="Reactions"><svg class="icon"><use href="#plant"/></svg></button>
        <button class="tool" aria-label="Sections"><svg class="icon"><use href="#section"/></svg></button>
        <button class="tool" aria-label="Windows"><svg class="icon"><use href="#tiles"/></svg></button>
        <button class="drop" aria-label="Window layouts"></button>
        <span class="rest"><svg class="icon"><use href="#cut"/></svg></span>
      </div>
      <div class="toolbar">
        <span class="grip"></span>
        <button class="tool" aria-label="Scale"><svg class="icon"><use href="#scale"/></svg></button>
      </div>
    </div>

    <main>
      <!-- Project navigator -->
      <aside class="navigator">
        <h2>Project Navigator - Results <span class="pin"><svg viewBox="0 0 8 8"><path d="M3 1h2v4H3zM2 5h4M4 5v3" fill="none" stroke="#667" stroke-width=".8"/></svg><svg viewBox="0 0 8 8"><path d="M1 1l5 5M6 1L1 6" stroke="#556"/></svg></span></h2>
        <div class="tree-panel">
          <ul class="tree">
            <li><i class="exp"></i><label><input type="checkbox"><svg class="icon"><use href="#bridge"/></svg><span class="selected">Global Deformations</span></label></li>
            <li><i class="exp minus"></i><label><input type="checkbox" checked><svg class="icon"><use href="#beam"/></svg><span>Members</span></label></li>
            <li><i class="guide"></i><i class="exp"></i><label><input type="checkbox" class="partial"><svg class="icon"><use href="#beam"/></svg><span>Local Deformations</span></label></li>
            <li><i class="guide"></i><i class="exp minus"></i><label><input type="checkbox" class="partial"><svg class="icon"><use href="#beam"/></svg><span>Internal Forces</span></label></li>
            <li><i class="guide"></i><i class="guide"></i><i class="guide tee"></i><label><input type="radio" name="force"><svg class="icon"><use href="#forcen"/></svg><span>N</span></label></li>
            <li><i class="guide"></i><i class="guide"></i><i class="guide tee"></i><label><input type="radio" name="force"><svg class="icon"><use href="#force"/></svg><span>V<sub>y</sub></span></label></li>
            <li><i class="guide"></i><i class="guide"></i><i class="guide tee"></i><label><input type="radio" name="force" checked><svg class="icon"><use href="#force"/></svg><span>V<sub>z</sub></span></label></li>
            <li><i class="guide"></i><i class="guide"></i><i class="guide tee"></i><label><input type="radio" name="force"><svg class="icon"><use href="#forcem"/></svg><span>M<sub>T</sub></span></label></li>
            <li><i class="guide"></i><i class="guide"></i><i class="guide tee"></i><label><input type="radio" name="force"><svg class="icon"><use href="#forcem"/></svg><span>M<sub>y</sub></span></label></li>
            <li><i class="guide"></i><i class="guide"></i><i class="guide tee end"></i><label><input type="radio" name="force"><svg class="icon"><use href="#forcem"/></svg><span>M<sub>z</sub></span></label></li>
            <li><i class="guide"></i><i class="exp last"></i><label><input type="checkbox" class="partial"><svg class="icon"><use href="#beam"/></svg><span>Strains</span></label></li>
            <li><i class="exp"></i><label><input type="checkbox"><svg class="icon"><use href="#iso"/></svg><span>Surfaces</span></label></li>
            <li><i class="exp"></i><label><input type="checkbox"><svg class="icon"><use href="#bridge"/></svg><span>Criteria</span></label></li>
            <li><i class="exp"></i><label><input type="checkbox"><svg class="icon"><use href="#plant"/></svg><span>Support Reactions</span></label></li>
            <li><i class="exp"></i><label><input type="checkbox"><svg class="icon"><use href="#values"/></svg><span>Values on Surfaces</span></label></li>
            <li><i class="exp last"></i><label><input type="checkbox" class="partial"><svg class="icon"><use href="#bridge"/></svg><span>Result Combinations</span></label></li>
          </ul>
        </div>
        <div class="nav-tabs">
          <button><svg class="icon"><use href="#data"/></svg>Data</button>
          <button><svg class="icon"><use href="#display"/></svg>Display</button>
          <button><svg class="icon"><use href="#views"/></svg>Views</button>
          <button class="active"><svg class="icon"><use href="#iso"/></svg>Results</button>
        </div>
      </aside>

      <div class="work">
        <!-- Model view -->
        <section class="view">
          <svg id="model"></svg>
          <div class="view-info">
            <p>Visibility mode</p>
            <p>Internal Forces V-z [kN]</p>
            <p>RC7 : DLC2 - Result Envelope - 100% X/ 30% Y</p>
          </div>
          <p class="view-max">Max V-z: -1689.92, Min V-z: -7596.76 kN</p>
        </section>

        <!-- Results table -->
        <section class="results">
          <h2>4.0 Results - Summary <span class="pin"><svg viewBox="0 0 8 8"><path d="M3 1h2v4H3zM2 5h4M4 5v3" fill="none" stroke="#778" stroke-width=".8"/></svg><svg viewBox="0 0 8 8"><path d="M1 1l5 5M6 1L1 6" stroke="#778"/></svg></span></h2>
          <div class="toolbar table-tools">
            <button class="tool" aria-label="Graphic"><svg class="icon"><use href="#t1"/></svg></button>
            <button class="tool" aria-label="Sort"><svg class="icon"><use href="#t2"/></svg></button>
            <button class="tool" aria-label="Next table"><svg class="icon"><use href="#t3"/></svg></button>
            <button class="tool on" aria-label="Result diagram"><svg class="icon"><use href="#t4"/></svg></button>
            <button class="tool" aria-label="Curve"><svg class="icon"><use href="#t5"/></svg></button>
            <span class="sep"></span>
            <button class="tool" aria-label="Table left"><svg class="icon"><use href="#tl"/></svg></button>
            <button class="tool" aria-label="Table right"><svg class="icon"><use href="#tr"/></svg></button>
            <span class="sep"></span>
            <button class="tool on" aria-label="Sync selection"><svg class="icon"><use href="#hook"/></svg></button>
            <button class="tool on" aria-label="Sync view"><svg class="icon"><use href="#hook2"/></svg></button>
            <span class="sep"></span>
            <button class="tool" aria-label="Colour rows"><svg class="icon"><use href="#rows"/></svg></button>
            <button class="tool" aria-label="Edit"><svg class="icon"><use href="#edit"/></svg></button>
            <span class="sep"></span>
            <span class="combo table-case">
              <select aria-label="Table load case"><option>RC7 - DLC2 - Result Envelope - 100% X/ 30% Y</option></select>
            </span>
            <span class="sep"></span>
            <button class="tool" aria-label="Previous case"><svg class="icon"><use href="#prev"/></svg></button>
            <button class="tool" aria-label="Next case"><svg class="icon"><use href="#next"/></svg></button>
            <span class="sep"></span>
            <button class="tool" aria-label="Filter"><svg class="icon"><use href="#filter"/></svg></button>
            <span class="sep"></span>
            <button class="tool" aria-label="Find"><svg class="icon"><use href="#find"/></svg></button>
            <span class="sep"></span>
            <button class="tool pressed" aria-label="Bars"><svg class="icon"><use href="#bars"/></svg></button>
            <span class="sep"></span>
            <button class="tool" aria-label="Excel"><svg class="icon"><use href="#excel"/></svg></button>
            <span class="sep"></span>
            <button class="tool" aria-label="Calculator"><svg class="icon"><use href="#calc"/></svg></button>
          </div>
          <div class="sheet">
            <table>
              <colgroup><col class="c-head"><col class="c-a"><col class="c-b"><col class="c-c"><col><col class="c-rest"></colgroup>
              <thead>
                <tr class="letters"><th></th><th class="current">A</th><th>B</th><th>C</th><th>D</th><th></th></tr>
                <tr><th></th><th>Description</th><th>Value</th><th>Unit</th><th>Comment</th><th></th></tr>
              </thead>
              <tbody>
                <tr class="case-row"><th class="current"></th><td colspan="4"><span class="box"></span>LC36 - DLC2 - Mode shape 3, direction - X , torsion +</td><td class="rest-cell"></td></tr>
                <tr><th></th><td class="desc">Sum of loads in X</td><td class="num">-589.81</td><td>kN</td><td></td><td class="rest-cell"></td></tr>
                <tr><th></th><td class="desc">Sum of support forces in X</td><td class="num">-589.81</td><td>kN</td><td>Deviation:&nbsp; 0.00 %</td><td class="rest-cell"></td></tr>
                <tr class="plain"><th></th><td class="desc">Sum of loads in Y</td><td class="num">2423.04</td><td>kN</td><td></td><td class="rest-cell"></td></tr>
                <tr class="plain"><th></th><td class="desc">Sum of support forces in Y</td><td class="num">2423.04</td><td>kN</td><td>Deviation:&nbsp; 0.00 %</td><td class="rest-cell"></td></tr>
                <tr><th></th><td class="desc">Sum of loads in Z</td><td class="num">0.00</td><td>kN</td><td></td><td class="rest-cell"></td></tr>
              </tbody>
            </table>
            <div class="scroll">
              <button aria-label="Scroll up"><svg viewBox="0 0 8 8"><path d="M2 5l2-2 2 2" fill="none" stroke="#444"/></svg></button>
              <span class="thumb"></span>
              <button aria-label="Scroll down"><svg viewBox="0 0 8 8"><path d="M2 3l2 2 2-2" fill="none" stroke="#444"/></svg></button>
            </div>
          </div>
          <div class="sheet-tabs">
            <button class="active">Results - Summary</button>
            <button>Nodes - Support Forces</button>
            <button>Nodes - Deformations</button>
            <button>Lines - Support Forces</button>
            <button>Members - Local Deformations</button>
            <button>Members - Global Deformations</button>
            <div class="tab-scroll">
              <button aria-label="First"><svg viewBox="0 0 8 8"><path d="M2 2v4" stroke="#999"/><path d="M6 2v4L3.500 4z" fill="#999"/></svg></button>
              <button aria-label="Back"><svg viewBox="0 0 8 8"><path d="M5 2v4L2.500 4z" fill="#999"/></svg></button>
              <button aria-label="Forward"><svg viewBox="0 0 8 8"><path d="M3 1.500v5L6 4z" fill="#111"/></svg></button>
              <button aria-label="Last"><svg viewBox="0 0 8 8"><path d="M6.500 1.500v5" stroke="#111"/><path d="M2 1.500v5L5 4z" fill="#111"/></svg></button>
            </div>
          </div>
        </section>
      </div>
    </main>

    <!-- Status bar -->
    <footer>
      <button>SNAP</button>
      <button class="off">GRID</button>
      <button>CARTES</button>
      <button>OSNAP</button>
      <button>GLINES</button>
      <button>DXF</button>
      <p>Visibility Mode</p>
      <span class="pane wide"></span>
      <span class="pane"></span>
      <span class="pane"></span>
      <span class="pane wide"></span>
    </footer>

    <script src="model.js"></script>
  </body>
</html>
```
FILE: styles.css
```css
* {
  box-sizing: border-box;
}

html {
  height: 100%;
}

body {
  height: 100%;
  margin: 0;
  padding: 1px 3px 2px 1px;
  display: flex;
  flex-direction: column;
  overflow: hidden;
  background: linear-gradient(#1b4569 60px, #4c5058 90px);
  font-family: "Open Sans", "Noto Sans", sans-serif;
  font-size: 7px;
  line-height: 9px;
  color: #222;
}

h1, h2, p, ul {
  margin: 0;
  padding: 0;
  font-size: 7px;
  font-weight: normal;
}

button {
  margin: 0;
  padding: 0;
  border: none;
  background: none;
  font: inherit;
  color: inherit;
}

.sprite {
  display: none;
}

.icon {
  flex: none;
  width: 12px;
  height: 12px;
  display: block;
}

/* title bar and menu */
.titlebar {
  flex: none;
  height: 18px;
  padding-left: 5px;
  display: flex;
  align-items: center;
  gap: 2px;
  background: #fff;
  color: #111;
}

.window-buttons {
  margin-left: auto;
  display: flex;
}

.window-buttons button {
  width: 29px;
  display: flex;
  justify-content: center;
}

.menubar {
  flex: none;
  height: 16px;
  display: flex;
  align-items: center;
  background: #cfd4de;
}

.menubar .icon {
  width: 11px;
  margin-right: -1px;
}

.menubar a {
  padding: 0 5px;
  color: #454952;
  text-decoration: none;
}

.mdi-buttons {
  margin-left: auto;
  display: flex;
  gap: 2px;
}

.mdi-buttons svg {
  width: 8px;
  height: 8px;
  display: block;
}

/* toolbars */
.toolbar-row {
  flex: none;
  height: 17px;
  display: flex;
  overflow: hidden;
  background: #d3dae6;
}

.toolbar-row + .toolbar-row {
  height: 16px;
}

.toolbar {
  flex: none;
  display: flex;
  align-items: center;
  background: linear-gradient(#f0f3f8, #dde3ee 60%, #d0d7e4);
}

.grip {
  flex: none;
  width: 2px;
  height: 10px;
  margin: 0 1px 0 3px;
  border-left: 1px dotted #8b95a8;
}

.toolbar + .toolbar .grip {
  margin-right: 2px;
}

.sep {
  flex: none;
  width: 1px;
  height: 10px;
  margin: 0 2px;
  background: #c0c8d6;
}

.tool {
  flex: none;
  width: 14px;
  height: 14px;
  padding: 1px;
}

.tool.on {
  background: linear-gradient(#fde0b0, #fbc67c 50%, #fddb92);
  box-shadow: inset 0 0 0 1px #d9a868;
}

.tool.pressed {
  background: #d8e2dd;
  box-shadow: inset 0 0 0 1px #b3bfba;
}

.drop {
  flex: none;
  width: 8px;
  height: 14px;
}

.drop::after {
  content: "";
  display: block;
  margin: 0 2px;
  border: 2px solid transparent;
  border-top-color: #777;
  border-bottom: none;
}

.rest {
  flex: none;
  width: 5px;
  overflow: hidden;
}

.combo {
  position: relative;
  display: block;
  height: 12px;
  margin-right: 2px;
}

.case {
  width: 137px;
}

.table-case {
  width: 126px;
  margin: 0;
}

.combo select {
  width: 100%;
  height: 12px;
  padding: 0 11px 0 2px;
  border: none;
  border-radius: 0;
  appearance: none;
  background: #fff;
  font: inherit;
  color: #111;
}

.combo::after {
  content: "";
  position: absolute;
  top: 1px;
  right: 1px;
  width: 9px;
  height: 10px;
  background: linear-gradient(#555, #555) 50% 4px / 3px 1px no-repeat #dfe3ea;
  pointer-events: none;
}

/* main area */
main {
  flex: 1;
  min-height: 0;
  display: grid;
  grid-template-columns: 181px 1fr;
  gap: 3px;
  background: #cbd1dc;
}

.navigator {
  display: flex;
  flex-direction: column;
  min-height: 0;
}

h2 {
  flex: none;
  height: 13px;
  padding: 0 3px;
  display: flex;
  align-items: center;
  background: #dbe0e9;
  color: #444a55;
}

.pin {
  margin-left: auto;
  display: flex;
  gap: 3px;
}

.pin svg {
  width: 8px;
  height: 8px;
}

.tree-panel {
  flex: 1;
  min-height: 0;
  padding: 1px 0 0 4px;
  border: 1px solid #a5acb8;
  border-width: 0 1px 1px 0;
  background: #fcfbf1;
  color: #333;
}

.tree {
  height: 182px;
  display: grid;
  grid-template-rows: repeat(16, 1fr);
  list-style: none;
}

.tree li,
.tree label {
  display: flex;
  align-items: center;
}

.tree label {
  gap: 1px;
}

.tree .icon {
  width: 11px;
  height: 11px;
}

.tree label span {
  margin-left: 1px;
  padding: 0 1px;
  white-space: nowrap;
}

.tree .selected {
  background: #0078d7;
  color: #fff;
  outline: 1px dotted #d98a3a;
  outline-offset: -1px;
}

.tree sub {
  font-size: 7px;
  line-height: 1px;
  vertical-align: -1px;
}

.tree input {
  appearance: none;
  flex: none;
  width: 9px;
  height: 9px;
  margin: 0;
  border: 1px solid #707684;
  background: #eef0f2;
}

.tree input[type="radio"] {
  border-radius: 50%;
}

.tree input[type="radio"]:checked {
  background: radial-gradient(#111 1px, #fff 3px);
}

.tree input[type="checkbox"]:checked::after {
  content: "";
  display: block;
  width: 5px;
  height: 3px;
  margin: 1px;
  border: solid #111;
  border-width: 0 0 1px 1px;
  transform: rotate(-45deg);
}

.tree .partial {
  background: #999;
  box-shadow: inset 0 0 0 1px #eee;
}

.guide,
.exp {
  position: relative;
  flex: none;
  align-self: stretch;
  width: 12px;
  background: repeating-linear-gradient(#999 0 2px, #ddd 2px 3px) 5px 0 / 1px 100% no-repeat;
}

.tee::after,
.exp::before {
  content: "";
  position: absolute;
  left: 6px;
  top: 5px;
  width: 5px;
  border-top: 1px dotted #999;
}

.guide.end,
.exp.last {
  background-size: 1px 50%;
}

.exp::after {
  content: "";
  position: absolute;
  left: 3px;
  top: 3px;
  width: 5px;
  height: 5px;
  border: 1px solid #a3adbd;
  background: linear-gradient(#346, #346) 50% 50% / 3px 1px no-repeat,
    linear-gradient(#346, #346) 50% 50% / 1px 3px no-repeat #fff;
}

.exp.minus::after {
  background: linear-gradient(#346, #346) 50% 50% / 3px 1px no-repeat #fff;
}

.nav-tabs {
  flex: none;
  height: 15px;
  padding-left: 3px;
  display: flex;
  align-items: flex-start;
  gap: 5px;
}

.nav-tabs button {
  height: 12px;
  padding: 0 1px;
  display: flex;
  align-items: center;
  gap: 1px;
  color: #555a64;
}

.nav-tabs .icon {
  width: 11px;
  height: 11px;
}

.nav-tabs .active {
  background: #f4f6f8;
}

/* model view */
.work {
  min-width: 0;
  display: flex;
  flex-direction: column;
}

.view {
  position: relative;
  flex: 1;
  min-height: 0;
  overflow: hidden;
  border: 1px solid #8f949c;
  border-width: 1px 0 0 1px;
  background: #fff;
  font-family: "Liberation Sans", Arial, sans-serif;
  color: #111;
}

#model {
  position: absolute;
  width: 100%;
  height: 100%;
}

.view-info {
  position: absolute;
  left: 2px;
  top: 3px;
}

.view-max {
  position: absolute;
  left: 2px;
  bottom: 2px;
}

/* results */
.results {
  flex: none;
  margin-top: 4px;
  background: #f0f0f0;
}

.results h2 {
  height: 12px;
  background: #b9c0cb;
  color: #555b66;
}

.table-tools {
  height: 17px;
  padding-left: 5px;
}

.sheet {
  display: flex;
  padding: 1px 0 10px 1px;
  border-top: 1px solid #888;
  font-family: Roboto, Arial, sans-serif;
}

table {
  flex: 1;
  border-collapse: collapse;
  table-layout: fixed;
  line-height: 9px;
  color: #222;
}

.c-head {
  width: 28px;
}

.c-a {
  width: 182px;
}

.c-b {
  width: 46px;
}

.c-c {
  width: 31px;
}

.c-rest {
  width: 22px;
}

th,
td {
  height: 10px;
  padding: 0 3px;
  border: 1px solid #b4b4b4;
  font-weight: normal;
  white-space: nowrap;
  text-align: left;
  background: #f8f8ff;
}

td {
  padding-left: 2px;
}

th {
  text-align: center;
  background: #efefef;
}

tbody th,
.letters th,
thead th:first-child {
  border-color: #8c8c8c;
  background: #dedede;
}

thead th:last-child,
.rest-cell {
  background: #efefef;
  border-right: none;
}

tr .current {
  background: #0078d7;
  color: #fff;
}

.plain td:not(.rest-cell) {
  background: #fff;
}

.case-row td:not(.rest-cell) {
  border: 1px dashed #222;
  background: #fff;
  font-weight: bold;
  font-size: 8px;
}

.box {
  display: inline-block;
  width: 6px;
  height: 6px;
  margin-right: 2px;
  border: 1px solid #222;
  background: linear-gradient(#222, #222) 50% 50% / 2px 1px no-repeat;
}

.desc {
  padding-left: 17px;
  background: linear-gradient(#c4c4c4, #c4c4c4) 5px 4px / 7px 1px no-repeat #f8f8ff;
}

.plain td.desc {
  background: linear-gradient(#c4c4c4, #c4c4c4) 5px 4px / 7px 1px no-repeat #fff;
}

.num {
  text-align: right;
}

.scroll {
  flex: none;
  width: 11px;
  display: flex;
  flex-direction: column;
  align-items: center;
}

.scroll svg {
  width: 10px;
  height: 10px;
  display: block;
}

.scroll .thumb {
  width: 9px;
  height: 10px;
  margin: 16px 0 auto;
  background: #cdcdcd;
}

.sheet-tabs {
  height: 24px;
  display: flex;
  align-items: flex-start;
  border-top: 1px solid #888;
  font-family: Roboto, Arial, sans-serif;
  color: #222;
}

.sheet-tabs > button {
  height: 11px;
  padding: 0 1px;
  border: 1px solid #999;
  border-width: 0 1px 1px 0;
  border-radius: 0 0 3px 0;
  white-space: nowrap;
}

.sheet-tabs > .active {
  background: #fff;
}

.tab-scroll {
  margin-left: auto;
  display: flex;
}

.tab-scroll button {
  width: 10px;
  height: 10px;
  border: 1px solid #d0d0d0;
  background: #f6f6f6;
}

.tab-scroll svg {
  width: 8px;
  height: 8px;
  display: block;
}

/* status bar */
footer {
  flex: none;
  height: 13px;
  padding-left: 275px;
  display: flex;
  align-items: center;
  gap: 1px;
  border-top: 1px solid #9aa1ad;
  background: linear-gradient(#d8dce4, #b9bfc9 45%, #a4abb6 50%, #bfc5cf);
  color: #33373e;
}

footer button {
  height: 11px;
  padding: 0 2px;
  border-left: 1px solid #333;
  background: #aab0ba;
}

footer .off {
  border-color: #e5e8ee;
  background: #ccd1da;
}

footer p {
  flex: 1;
  padding-left: 1px;
}

.pane {
  width: 46px;
  height: 11px;
  border-left: 1px solid #8d95a2;
}

.pane.wide {
  width: 56px;
}

@media (max-width: 600px) {
  footer {
    padding-left: 20px;
  }
}
```
FILE: model.js
```js
const NS = "http://www.w3.org/2000/svg";
const svg = document.getElementById("model");
const root = document.createElementNS(NS, "g");
root.setAttribute("transform", "translate(-186 -69)");
svg.appendChild(root);

function add(tag, attrs, text) {
  const el = document.createElementNS(NS, tag);
  for (const key in attrs) el.setAttribute(key, attrs[key]);
  if (text) el.textContent = text;
  root.appendChild(el);
  return el;
}

function line(x1, y1, x2, y2, stroke, width) {
  add("line", { x1, y1, x2, y2, stroke, "stroke-width": width || 1 });
}

// storey levels, top to base
const levels = [86, 116, 146, 177, 207, 238, 268, 298, 329, 359, 389];
const ends = [320, 318, 317, 317, 318, 319, 317, 317, 318, 318];
const outer = [332, 330, 330, 329, 330, 331, 330, 329, 329, 330];
const inner = [347, 342, 338, 335, 333, 331, 334, 336, 340, 340];
const walls = [[369, 402], [375, 410], [383, 418], [390, 426], [398, 434], [406, 443], [414, 450], [422, 458], [430, 466], [430, 466]];
const mirror = x => 846 - x;

// concrete core
add("rect", { x: 365, y: 86, width: 122, height: 303, fill: "#cbcbcb" });
add("rect", { x: 428, y: 86, width: 13, height: 303, fill: "#c8c8c8" });
[398, 428, 441].forEach(x => line(x, 86, x, 389, "#c3c3c3", 1));

for (let i = 0; i < 10; i++) {
  const top = levels[i];
  const bottom = levels[i + 1];
  [outer[i], inner[i]].forEach(x => {
    line(x, top, x, bottom, "#cbcbcb", 4);
    line(mirror(x), top, mirror(x), bottom, "#cbcbcb", 4);
  });
  walls[i].forEach(x => {
    line(x, top, x, bottom, "#d0d0d0", 2);
    line(x + 2, top, x + 2, bottom, "#c5c5c5", 1);
    add("circle", { cx: x + 1, cy: bottom, r: 1, fill: "#cdb9b9" });
  });
}

levels.slice(0, 10).forEach((y, i) => {
  line(ends[i], y, mirror(ends[i]), y, "#bfbfbf", 1.5);
  line(365, y, 487, y, "#c0c7c5", 1.5);
  [ends[i], mirror(ends[i]), outer[i], mirror(outer[i]), 365, 487].forEach(x => {
    add("circle", { cx: x, cy: y, r: 1.5, fill: "#c4b6b6" });
  });
});
line(365, 86, 487, 86, "#bcb8b8", 2);

// supports
function support(x) {
  add("path", { d: `M${x} 389v7M${x - 3} 394l3-3 3 3z`, stroke: "#b3cfb3", fill: "#b3cfb3" });
}
for (let x = 370; x < 398; x += 9) support(x);
for (let x = 399; x < 446; x += 5) support(x);
for (let x = 451; x < 488; x += 7) support(x);
[330, 340, 506, 516].forEach(support);

// coordinate systems
function axes(x, y) {
  line(x, y, x, y - 20, "#1a1aff", 1);
  add("path", { d: `M${x - 2} ${y - 19}h4l-2-7z`, fill: "#0000c8" });
  line(x, y, x + 16, y, "#e00000", 1);
  add("path", { d: `M${x + 16} ${y - 2}v4l6-2z`, fill: "#c80000" });
  add("path", { d: `M${x + 9} ${y}h7`, stroke: "#19b219", "stroke-width": 2 });
  add("text", { x: x - 2, y: y - 28, fill: "#1a1aff" }, "Z");
  add("text", { x: x + 26, y: y + 3, fill: "#e00000" }, "X");
}
axes(220, 346);
axes(389, 387);

// V-z diagram
const curve = [
  [622, 83], [622, 107], [620, 113], [619, 138], [618, 144], [617, 169], [616, 174], [616, 199],
  [615, 205], [614, 230], [613, 240], [613, 265], [612, 271], [612, 295], [611, 301], [611, 325],
  [610, 332], [610, 362], [611, 372], [613, 386]
];

function curveX(y) {
  let i = 1;
  while (i < curve.length - 1 && curve[i][1] < y) i++;
  const a = curve[i - 1];
  const b = curve[i];
  return a[0] + (b[0] - a[0]) * (y - a[1]) / (b[1] - a[1]);
}

for (let y = 86; y < 386; y += 3) {
  line(curveX(y), y + 0.5, 626, y + 0.5, y % 4 ? "#ff9a9a" : "#ff4a4a", 1);
}
add("polyline", { points: curve.join(" "), fill: "none", stroke: "#ff7a7a" });
line(622.5, 83, 622.5, 387, "#ff9a9a", 1);
line(626.5, 83, 626.5, 387, "#ff9a9a", 5);
line(626, 83, 626, 387, "#ff1010", 2);
[83, 113, 144, 174, 205, 235, 265, 296, 326, 357, 387].forEach(y => {
  line(curveX(Math.min(y, 386)), y, 629, y, "#ff3030", 1);
  add("rect", { x: 624, y: y - 1.5, width: 4, height: 3, fill: "#ff0000" });
});

const labels = [
  [620, 83, "-1689.92"], [617, 113, "-2910.33"], [615, 144, "-3745.45"], [614, 174, "-4374.86"],
  [613, 205, "-4944.26"], [611, 229, "-5405.69"], [610, 241, "-5987.57"], [609, 271, "-6536.84"],
  [608, 301, "-7052.29"], [607, 332, "-7473.17"], [606, 362, "-7596.76"], [610, 386, "-6137.48"]
];
labels.forEach(([x, y, text]) => {
  add("text", { x, y: y + 2, fill: "#ff0000", "text-anchor": "end" }, text);
});
```
